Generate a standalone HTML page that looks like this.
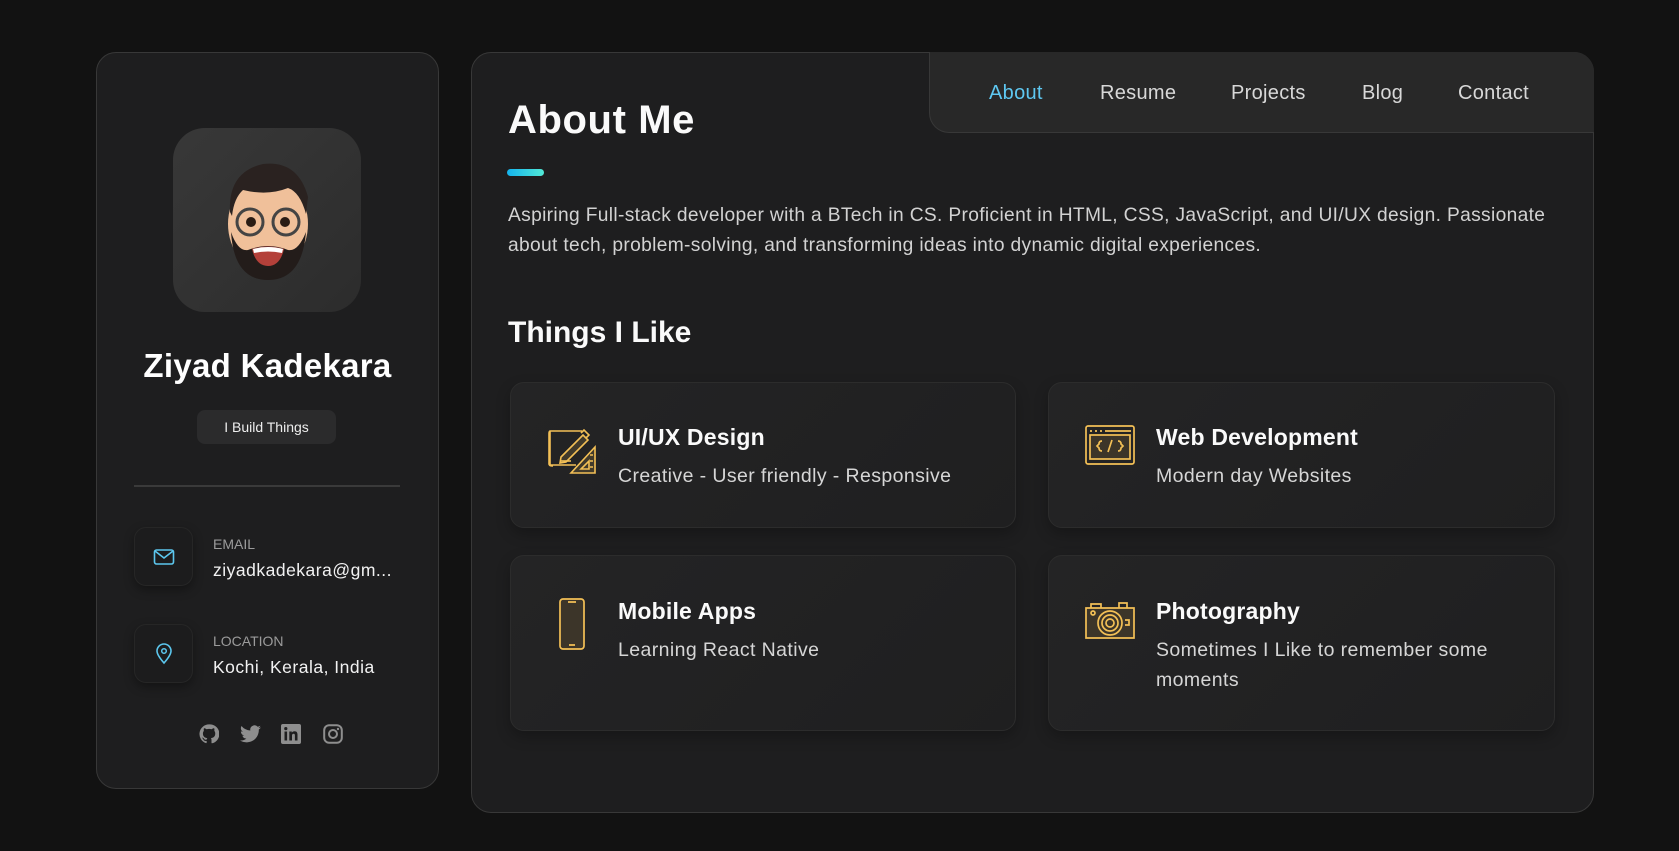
<!DOCTYPE html>
<html><head><meta charset="utf-8"><style>
*{margin:0;padding:0;box-sizing:border-box}
body{width:1679px;height:851px;background:#121212;font-family:"Liberation Sans",sans-serif;position:relative;overflow:hidden;color:#fff}
.abs{position:absolute}
.card{background:#1e1e1f;border:1px solid #383838;border-radius:20px}
.nowrap{white-space:nowrap}
.tile{position:absolute;border-radius:14px;background:linear-gradient(135deg,#242425,#1f1f20);border:1px solid #2c2c2c;box-shadow:0 6px 14px rgba(0,0,0,.25)}
.tile h3{position:absolute;left:107px;font-size:23px;font-weight:bold;color:#fafafa;white-space:nowrap;letter-spacing:0.2px}
.tile p{position:absolute;left:107px;font-size:19.5px;color:#d6d6d6;line-height:30px;white-space:nowrap;letter-spacing:0.4px}
.tile svg{position:absolute;left:36px}
.ibox{position:absolute;left:134px;width:59px;height:59px;border-radius:12px;background:#1c1c1d;box-shadow:0 4px 10px rgba(0,0,0,.35);border:1px solid #262626;display:flex;align-items:center;justify-content:center}
.lab{position:absolute;left:213px;font-size:14px;color:#9b9b9b}
.val{position:absolute;left:213px;font-size:17.5px;color:#f2f2f2;white-space:nowrap;letter-spacing:0.5px}
.nav a{position:absolute;top:82px;font-size:20px;color:#d8d8d8;white-space:nowrap;letter-spacing:0.3px}
</style></head><body>

<div class="abs card" style="left:96px;top:52px;width:343px;height:737px"></div>
<div class="abs" style="left:173px;top:128px;width:188px;height:184px;border-radius:32px;background:linear-gradient(135deg,#383838,#2c2c2c)"></div>
<svg class="abs" style="left:218px;top:152px" width="100" height="130" viewBox="0 0 100 130">
 <ellipse cx="50" cy="72" rx="40" ry="48" fill="#f0c09a"/>
 <path d="M12 60 Q10 20 45 12 Q80 8 90 45 L88 62 Q82 40 70 36 Q50 44 25 38 Q16 46 14 64Z" fill="#2a2220"/>
 <path d="M13 80 Q16 128 50 128 Q84 128 88 80 Q80 100 70 98 Q50 90 30 98 Q20 100 13 80Z" fill="#231c1a"/>
 <circle cx="32" cy="70" r="13" fill="none" stroke="#444" stroke-width="3"/>
 <circle cx="68" cy="70" r="13" fill="none" stroke="#444" stroke-width="3"/>
 <circle cx="33" cy="70" r="5" fill="#2a1c14"/><circle cx="67" cy="70" r="5" fill="#2a1c14"/>
 <path d="M34 97 Q50 92 66 97 Q62 114 50 114 Q38 114 34 97Z" fill="#b4403a"/>
 <path d="M35 97 Q50 93 65 97 L64 101 Q50 98 36 101Z" fill="#fff"/>
</svg>
<div class="abs nowrap" style="left:96px;width:343px;text-align:center;top:347px;font-size:33px;font-weight:bold;letter-spacing:0.3px">Ziyad Kadekara</div>
<div class="abs" style="left:197px;top:410px;width:139px;height:34px;border-radius:8px;background:#2b2b2c;font-size:14px;color:#eee;text-align:center;line-height:34px">I Build Things</div>
<div class="abs" style="left:134px;top:485px;width:266px;height:2px;background:#3a3a3a"></div>

<div class="ibox" style="top:527px"><svg width="22" height="18" viewBox="0 0 22 18"><rect x="1.5" y="2" width="19" height="14" rx="2" fill="none" stroke="#5cc7ee" stroke-width="1.6"/><path d="M2 3 L11 10 L20 3" fill="none" stroke="#5cc7ee" stroke-width="1.6"/></svg></div>
<div class="lab" style="top:536px">EMAIL</div>
<div class="val" style="top:560px">ziyadkadekara@gm...</div>
<div class="ibox" style="top:624px"><svg width="18" height="22" viewBox="0 0 18 22"><path d="M9 20 Q2 12 2 8 A7 7 0 0 1 16 8 Q16 12 9 20Z" fill="none" stroke="#5cc7ee" stroke-width="1.6"/><circle cx="9" cy="8" r="2.3" fill="none" stroke="#5cc7ee" stroke-width="1.5"/></svg></div>
<div class="lab" style="top:633px">LOCATION</div>
<div class="val" style="top:657px">Kochi, Kerala, India</div>

<svg class="abs" style="left:199px;top:724px" width="20" height="20" viewBox="0 0 24 24"><path fill="#8e8e8e" d="M12 .5a11.5 11.5 0 0 0-3.6 22.4c.6.1.8-.3.8-.6v-2c-3.2.7-3.9-1.5-3.9-1.5-.5-1.3-1.3-1.7-1.3-1.7-1-.7.1-.7.1-.7 1.2.1 1.8 1.2 1.8 1.2 1 1.8 2.7 1.3 3.4 1 .1-.8.4-1.3.7-1.6-2.6-.3-5.3-1.3-5.3-5.7 0-1.3.5-2.3 1.2-3.1-.1-.3-.5-1.5.1-3.1 0 0 1-.3 3.2 1.2a11 11 0 0 1 5.8 0c2.2-1.5 3.2-1.2 3.2-1.2.6 1.6.2 2.8.1 3.1.8.8 1.2 1.8 1.2 3.1 0 4.4-2.7 5.4-5.3 5.7.4.4.8 1.1.8 2.2v3.3c0 .3.2.7.8.6A11.5 11.5 0 0 0 12 .5z"/></svg>
<svg class="abs" style="left:240px;top:725px" width="21" height="18" viewBox="0 0 24 20"><path fill="#8e8e8e" d="M24 2.4a9.8 9.8 0 0 1-2.8.8A4.9 4.9 0 0 0 23.3.5a9.8 9.8 0 0 1-3.1 1.2A4.9 4.9 0 0 0 11.8 6 14 14 0 0 1 1.7.9a4.9 4.9 0 0 0 1.5 6.6A4.9 4.9 0 0 1 1 6.9v.1a4.9 4.9 0 0 0 3.9 4.8 4.9 4.9 0 0 1-2.2.1 4.9 4.9 0 0 0 4.6 3.4A9.9 9.9 0 0 1 0 17.3 14 14 0 0 0 7.5 19.5c9.1 0 14-7.5 14-14v-.6A10 10 0 0 0 24 2.4z"/></svg>
<svg class="abs" style="left:281px;top:724px" width="20" height="20" viewBox="0 0 20 20"><rect width="20" height="20" rx="2" fill="#8e8e8e"/><rect x="3.5" y="7.5" width="2.6" height="9" fill="#1e1e1f"/><circle cx="4.8" cy="4.6" r="1.6" fill="#1e1e1f"/><path d="M8.3 7.5h2.5v1.3c.5-.9 1.5-1.5 2.8-1.5 2.2 0 2.9 1.4 2.9 3.5v5.7h-2.6v-5c0-1.1-.3-1.8-1.3-1.8s-1.6.7-1.6 1.8v5H8.3z" fill="#1e1e1f"/></svg>
<svg class="abs" style="left:323px;top:724px" width="20" height="20" viewBox="0 0 20 20"><rect x="1.2" y="1.2" width="17.6" height="17.6" rx="5" fill="none" stroke="#8e8e8e" stroke-width="2"/><circle cx="10" cy="10" r="4" fill="none" stroke="#8e8e8e" stroke-width="2"/><circle cx="15" cy="5" r="1.2" fill="#8e8e8e"/></svg>

<div class="abs card" style="left:471px;top:52px;width:1123px;height:761px"></div>
<div class="abs nav" style="left:929px;top:52px;width:665px;height:81px;background:#282828;border:1px solid #383838;border-top:none;border-right:none;border-radius:0 20px 0 20px;"></div>
<div class="nav">
 <a style="left:989px;color:#5ec8f2">About</a>
 <a style="left:1100px">Resume</a>
 <a style="left:1231px">Projects</a>
 <a style="left:1362px">Blog</a>
 <a style="left:1458px">Contact</a>
</div>

<div class="abs nowrap" style="left:508px;top:98px;font-size:40px;font-weight:bold;color:#fafafa;letter-spacing:0.6px">About Me</div>
<div class="abs" style="left:507px;top:169px;width:37px;height:7px;border-radius:4px;background:linear-gradient(90deg,#14b4ee,#52e9d6)"></div>
<div class="abs" style="left:508px;top:201px;font-size:19.2px;line-height:30px;color:#d2d2d2;white-space:nowrap;letter-spacing:0.34px">Aspiring Full-stack developer with a BTech in CS. Proficient in HTML, CSS, JavaScript, and UI/UX design. Passionate<br>about tech, problem-solving, and transforming ideas into dynamic digital experiences.</div>
<div class="abs nowrap" style="left:508px;top:316px;font-size:30px;font-weight:bold;color:#fafafa">Things I Like</div>

<div class="tile" style="left:510px;top:382px;width:506px;height:146px">
 <svg style="top:42px" width="50" height="50" viewBox="0 0 50 50" fill="none" stroke="#f3c056" stroke-width="1.6"><path d="M3 6 h32 M3 6 v34 h26" /><path d="M3 6 q-1 0 -1 3 v30 q0 2 4 2" /><path d="M14 32 l22 -22 5 5 -22 22 -6 1z" fill="rgba(243,192,86,.15)"/><path d="M34 8 l3 -3 5 5 -3 3"/><path d="M14 36 h10"/><path d="M48 22 v26 h-24z" fill="rgba(243,192,86,.15)"/><path d="M42 36 v8 h-8z"/><path d="M46 30 h-3 M46 36 h-3 M46 42 h-3"/></svg>
 <h3 style="top:41px">UI/UX Design</h3><p style="top:78px">Creative - User friendly - Responsive</p>
</div>
<div class="tile" style="left:1048px;top:382px;width:507px;height:146px">
 <svg style="top:42px" width="50" height="42" viewBox="0 0 50 42" fill="none" stroke="#f3c056" stroke-width="1.7"><rect x="1" y="1" width="48" height="38" rx="2"/><path d="M5 6 h2 M10 6 h2 M15 6 h2 M20 6 h26"/><rect x="5" y="10" width="40" height="24" fill="rgba(243,192,86,.12)"/><path d="M17 16 q-3 0 -3 3 l-2 2 2 2 q0 3 3 3 M33 16 q3 0 3 3 l2 2 -2 2 q0 3 -3 3 M27 15 l-4 12"/></svg>
 <h3 style="top:41px">Web Development</h3><p style="top:78px">Modern day Websites</p>
</div>
<div class="tile" style="left:510px;top:555px;width:506px;height:176px">
 <svg style="top:42px;left:48px" width="26" height="52" viewBox="0 0 26 52" fill="none" stroke="#f3c056" stroke-width="1.7"><rect x="1" y="1" width="24" height="50" rx="3" fill="rgba(243,192,86,.12)"/><path d="M9 4 h8 M10 47 h6"/></svg>
 <h3 style="top:42px">Mobile Apps</h3><p style="top:79px">Learning React Native</p>
</div>
<div class="tile" style="left:1048px;top:555px;width:507px;height:176px">
 <svg style="top:44px" width="50" height="40" viewBox="0 0 50 40" fill="none" stroke="#f3c056" stroke-width="1.7"><path d="M1 8 h48 v30 h-48z" fill="rgba(243,192,86,.12)"/><path d="M6 8 v-4 h10 v4 M34 8 v-5 h8 v5"/><circle cx="25" cy="23" r="12"/><circle cx="25" cy="23" r="8"/><circle cx="25" cy="23" r="4"/><circle cx="8" cy="13" r="2"/><path d="M40 20 h4 v5 h-4"/></svg>
 <h3 style="top:42px">Photography</h3><p style="top:79px">Sometimes I Like to remember some<br>moments</p>
</div>
</body></html>
